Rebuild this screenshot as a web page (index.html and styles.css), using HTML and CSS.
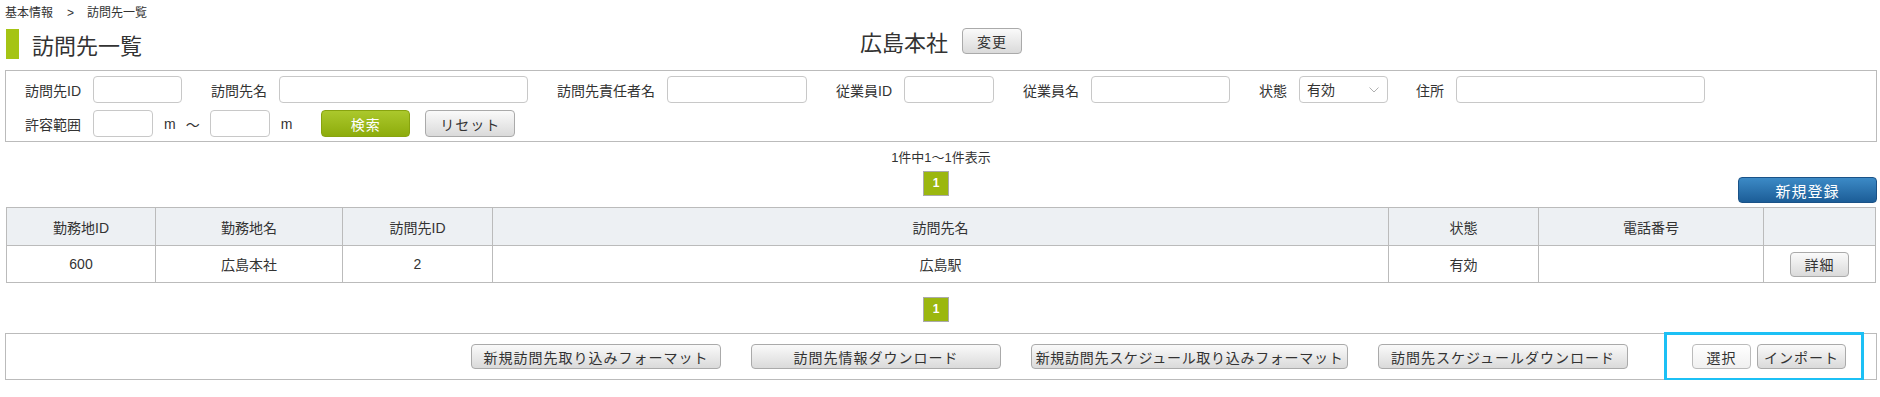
FILE: index.html
```html
<!DOCTYPE html>
<html>
<head>
  <meta charset="utf-8">
  <title>訪問先一覧</title>
  <link rel="stylesheet" href="styles.css">
</head>
<body>
  <div class="page">
    <div class="breadcrumb">
      <span>基本情報</span><span class="sep">&gt;</span><span>訪問先一覧</span>
    </div>

    <div class="header">
      <h1 class="title"><span class="title-bar"></span>訪問先一覧</h1>
      <div class="office">
        <span class="office-name">広島本社</span>
        <button class="btn btn-change">変更</button>
      </div>
      <div></div>
    </div>

    <div class="search">
      <div class="search-row">
        <label class="lbl">訪問先ID</label>
        <input type="text" class="inp w89">
        <label class="lbl">訪問先名</label>
        <input type="text" class="inp w249">
        <label class="lbl">訪問先責任者名</label>
        <input type="text" class="inp w140">
        <label class="lbl">従業員ID</label>
        <input type="text" class="inp w90">
        <label class="lbl">従業員名</label>
        <input type="text" class="inp w139">
        <label class="lbl">状態</label>
        <span class="select-wrap">
          <select class="sel">
            <option>有効</option>
            <option>無効</option>
          </select>
          <svg class="sel-arrow" width="10" height="6" viewBox="0 0 10 6"><path d="M0.5 0.5 L5 5 L9.5 0.5" fill="none" stroke="#b0b0b0" stroke-width="1"/></svg>
        </span>
        <label class="lbl">住所</label>
        <input type="text" class="inp w249">
      </div>
      <div class="search-row row2">
        <label class="lbl">許容範囲</label>
        <input type="text" class="inp w60">
        <span class="unit">m</span>
        <span class="tilde">〜</span>
        <input type="text" class="inp w60">
        <span class="unit unit2">m</span>
        <button class="btn btn-search">検索</button>
        <button class="btn btn-reset">リセット</button>
      </div>
    </div>

    <div class="count">1件中1〜1件表示</div>

    <div class="pager-row">
      <div></div>
      <span class="page-no">1</span>
      <button class="btn btn-new">新規登録</button>
    </div>

    <table class="list">
      <colgroup>
        <col style="width:149px">
        <col style="width:187px">
        <col style="width:150px">
        <col style="width:896px">
        <col style="width:150px">
        <col style="width:225px">
        <col style="width:112px">
      </colgroup>
      <thead>
        <tr>
          <th>勤務地ID</th>
          <th>勤務地名</th>
          <th>訪問先ID</th>
          <th>訪問先名</th>
          <th>状態</th>
          <th>電話番号</th>
          <th></th>
        </tr>
      </thead>
      <tbody>
        <tr>
          <td>600</td>
          <td>広島本社</td>
          <td>2</td>
          <td>広島駅</td>
          <td>有効</td>
          <td></td>
          <td><button class="btn btn-detail">詳細</button></td>
        </tr>
      </tbody>
    </table>

    <div class="pager-bottom">
      <span class="page-no">1</span>
    </div>

    <div class="io-bar">
      <button class="btn btn-io w250">新規訪問先取り込みフォーマット</button>
      <button class="btn btn-io w250">訪問先情報ダウンロード</button>
      <button class="btn btn-io w317">新規訪問先スケジュール取り込みフォーマット</button>
      <button class="btn btn-io w250">訪問先スケジュールダウンロード</button>
      <div class="import-box">
        <button class="btn btn-select">選択</button>
        <button class="btn btn-import">インポート</button>
      </div>
    </div>
  </div>
</body>
</html>
```

FILE: styles.css
```css
body {
  margin: 0;
  background: #fff;
  color: #333;
  font-family: "Liberation Sans", "Noto Sans CJK JP", sans-serif;
  font-size: 14px;
}
.page {
  padding: 0 3px 0 5px;
}

/* breadcrumb + title */
.breadcrumb {
  margin-top: 5px;
  font-size: 12px;
  line-height: 16px;
}
.breadcrumb .sep {
  margin: 0 13px 0 14px;
}
.header {
  display: grid;
  grid-template-columns: 1fr auto 1fr;
  height: 32px;
  margin-top: 7px;
}
.title {
  display: flex;
  align-items: center;
  margin: 0;
  font-size: 22px;
  font-weight: normal;
  color: #333;
}
.title-bar {
  width: 13px;
  height: 30px;
  margin: 0 13px 0 1px;
  background: #a5c414;
}
.office {
  display: flex;
  align-items: center;
  align-self: start;
  height: 26px;
}
.office-name {
  font-size: 22px;
  margin-right: 14px;
}

/* buttons */
.btn {
  box-sizing: border-box;
  height: 25px;
  padding: 0 2px;
  font-family: "Liberation Sans", "Noto Sans CJK JP", sans-serif;
  font-size: 14px;
  letter-spacing: 1px;
  white-space: nowrap;
  color: #333;
  background: linear-gradient(#fafafa, #dadada);
  border: 1px solid #aaa;
  border-radius: 4px;
  cursor: pointer;
}
.btn-change {
  width: 60px;
  height: 26px;
}

/* search form */
.search {
  margin-top: 10px;
  border: 1px solid #bbb;
  padding: 5px 10px 4px 19px;
}
.search-row {
  display: flex;
  align-items: center;
  height: 27px;
}
.row2 {
  margin-top: 7px;
}
.lbl {
  margin-right: 12px;
  white-space: nowrap;
}
.inp {
  box-sizing: border-box;
  height: 27px;
  margin-right: 29px;
  border: 1px solid #c8c8c8;
  border-radius: 4px;
  background: #fff;
}
.w60 { width: 60px; }
.w89 { width: 89px; }
.w90 { width: 90px; }
.w139 { width: 139px; }
.w140 { width: 140px; }
.w249 { width: 249px; }
.row2 .inp {
  margin-right: 11px;
}
.select-wrap {
  position: relative;
  margin-right: 28px;
}
.sel {
  box-sizing: border-box;
  width: 89px;
  height: 27px;
  padding: 0 0 0 7px;
  font-family: "Liberation Sans", "Noto Sans CJK JP", sans-serif;
  font-size: 14px;
  color: #333;
  background: #fff;
  border: 1px solid #c8c8c8;
  border-radius: 4px;
  appearance: none;
  -webkit-appearance: none;
}
.sel-arrow {
  position: absolute;
  right: 9px;
  top: 11px;
}
.unit {
  margin-right: 10px;
}
.unit2 {
  margin-right: 29px;
}
.tilde {
  margin-right: 10px;
}
.btn-search {
  width: 89px;
  height: 27px;
  margin-right: 15px;
  color: #fff;
  background: linear-gradient(#abc82c, #8dac0c);
  border-color: #88a30f;
}
.btn-reset {
  width: 90px;
  height: 27px;
}

/* count + pager */
.count {
  margin-top: 7px;
  text-align: center;
  font-size: 13px;
  line-height: 18px;
}
.pager-row {
  display: grid;
  grid-template-columns: 1fr auto 1fr;
  height: 32px;
  margin-top: 4px;
}
.page-no {
  box-sizing: border-box;
  display: inline-block;
  width: 26px;
  height: 25px;
  margin-right: 10px;
  line-height: 23px;
  text-align: center;
  font-size: 12px;
  font-weight: bold;
  color: #fff;
  background: #9bb70f;
  border: 1px solid #aaa;
}
.pager-row .page-no {
  align-self: start;
}
.btn-new {
  justify-self: end;
  align-self: end;
  width: 139px;
  height: 26px;
  font-size: 15px;
  color: #fff;
  background: linear-gradient(#3c8ac6, #1c5d97);
  border-color: #1a5287;
}

/* list table */
.list {
  width: 1869px;
  margin: 4px 0 0 1px;
  border-collapse: collapse;
  table-layout: fixed;
}
.list th,
.list td {
  border: 1px solid #bbb;
  text-align: center;
  font-size: 14px;
  padding: 0;
}
.list th {
  height: 37px;
  font-weight: normal;
  background: #edf0f3;
}
.list td {
  height: 36px;
}
.btn-detail {
  width: 59px;
  vertical-align: middle;
}

.pager-bottom {
  margin-top: 14px;
  text-align: center;
  height: 25px;
}

/* import / export bar */
.io-bar {
  display: flex;
  justify-content: flex-end;
  align-items: center;
  box-sizing: border-box;
  height: 47px;
  margin-top: 11px;
  border: 1px solid #bbb;
}
.btn-io {
  margin-left: 30px;
}
.w250 { width: 250px; }
.w317 {
  width: 317px;
  padding: 0;
  letter-spacing: 0.7px;
}
.import-box {
  display: flex;
  align-items: center;
  align-self: stretch;
  margin: -2px 12px -2px 36px;
  padding: 0 15px 0 25px;
  border: 3px solid #1cc0f5;
}
.btn-select {
  width: 59px;
  margin-right: 6px;
  background: linear-gradient(#fff, #f0f0f0);
  border-color: #bbb;
}
.btn-import {
  width: 89px;
}
```
